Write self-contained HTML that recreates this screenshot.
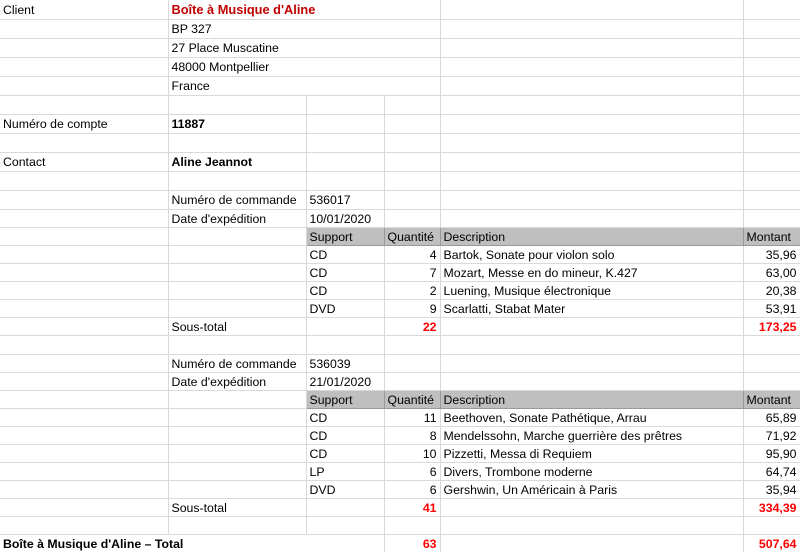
<!DOCTYPE html>
<html><head><meta charset="utf-8"><style>
html,body{margin:0;padding:0;background:#fff;width:800px;height:552px;overflow:hidden}
table{border-collapse:collapse;table-layout:fixed;width:800px;font-family:"Liberation Sans",sans-serif;font-size:12.3px;color:#000}
td{border-right:1px solid #d9d9d9;border-bottom:1px solid #d9d9d9;padding:1px 3px 0 3px;white-space:nowrap;overflow:hidden;line-height:14px}
.r{text-align:right}
.b{font-weight:bold}
.red{color:#ff0000;font-weight:bold}
.dr{color:#c00000;font-weight:bold;font-size:12.8px}
.h td.g{background:#bfbfbf;border:1px solid #999}
</style></head><body>
<table>
<colgroup><col style="width:168px"><col style="width:138px"><col style="width:78px"><col style="width:56px"><col style="width:303px"><col style="width:57px"></colgroup>
<tr style="height:19px"><td>Client</td><td colspan="3" class="dr">Boîte à Musique d'Aline</td><td></td><td></td></tr>
<tr style="height:19px"><td></td><td colspan="3">BP 327</td><td></td><td></td></tr>
<tr style="height:19px"><td></td><td colspan="3">27 Place Muscatine</td><td></td><td></td></tr>
<tr style="height:19px"><td></td><td colspan="3">48000 Montpellier</td><td></td><td></td></tr>
<tr style="height:19px"><td></td><td colspan="3">France</td><td></td><td></td></tr>
<tr style="height:19px"><td></td><td></td><td></td><td></td><td></td><td></td></tr>
<tr style="height:19px"><td>Numéro de compte</td><td class="b">11887</td><td></td><td></td><td></td><td></td></tr>
<tr style="height:19px"><td></td><td></td><td></td><td></td><td></td><td></td></tr>
<tr style="height:19px"><td>Contact</td><td class="b">Aline Jeannot</td><td></td><td></td><td></td><td></td></tr>
<tr style="height:19px"><td></td><td></td><td></td><td></td><td></td><td></td></tr>
<tr style="height:19px"><td></td><td>Numéro de commande</td><td>536017</td><td></td><td></td><td></td></tr>
<tr style="height:18px"><td></td><td>Date d'expédition</td><td>10/01/2020</td><td></td><td></td><td></td></tr>
<tr style="height:18px" class="h"><td></td><td></td><td class="g">Support</td><td class="g">Quantité</td><td class="g">Description</td><td class="g">Montant</td></tr>
<tr style="height:18px"><td></td><td></td><td>CD</td><td class="r">4</td><td>Bartok, Sonate pour violon solo</td><td class="r">35,96</td></tr>
<tr style="height:18px"><td></td><td></td><td>CD</td><td class="r">7</td><td>Mozart, Messe en do mineur, K.427</td><td class="r">63,00</td></tr>
<tr style="height:18px"><td></td><td></td><td>CD</td><td class="r">2</td><td>Luening, Musique électronique</td><td class="r">20,38</td></tr>
<tr style="height:18px"><td></td><td></td><td>DVD</td><td class="r">9</td><td>Scarlatti, Stabat Mater</td><td class="r">53,91</td></tr>
<tr style="height:18px"><td></td><td>Sous-total</td><td></td><td class="r red">22</td><td></td><td class="r red">173,25</td></tr>
<tr style="height:19px"><td></td><td></td><td></td><td></td><td></td><td></td></tr>
<tr style="height:18px"><td></td><td>Numéro de commande</td><td>536039</td><td></td><td></td><td></td></tr>
<tr style="height:18px"><td></td><td>Date d'expédition</td><td>21/01/2020</td><td></td><td></td><td></td></tr>
<tr style="height:18px" class="h"><td></td><td></td><td class="g">Support</td><td class="g">Quantité</td><td class="g">Description</td><td class="g">Montant</td></tr>
<tr style="height:18px"><td></td><td></td><td>CD</td><td class="r">11</td><td>Beethoven, Sonate Pathétique, Arrau</td><td class="r">65,89</td></tr>
<tr style="height:18px"><td></td><td></td><td>CD</td><td class="r">8</td><td>Mendelssohn, Marche guerrière des prêtres</td><td class="r">71,92</td></tr>
<tr style="height:18px"><td></td><td></td><td>CD</td><td class="r">10</td><td>Pizzetti, Messa di Requiem</td><td class="r">95,90</td></tr>
<tr style="height:18px"><td></td><td></td><td>LP</td><td class="r">6</td><td>Divers, Trombone moderne</td><td class="r">64,74</td></tr>
<tr style="height:18px"><td></td><td></td><td>DVD</td><td class="r">6</td><td>Gershwin, Un Américain à Paris</td><td class="r">35,94</td></tr>
<tr style="height:18px"><td></td><td>Sous-total</td><td></td><td class="r red">41</td><td></td><td class="r red">334,39</td></tr>
<tr style="height:18px"><td></td><td></td><td></td><td></td><td></td><td></td></tr>
<tr style="height:18px"><td colspan="3" class="b">Boîte à Musique d'Aline – Total</td><td class="r red">63</td><td></td><td class="r red">507,64</td></tr>
</table>
</body></html>
